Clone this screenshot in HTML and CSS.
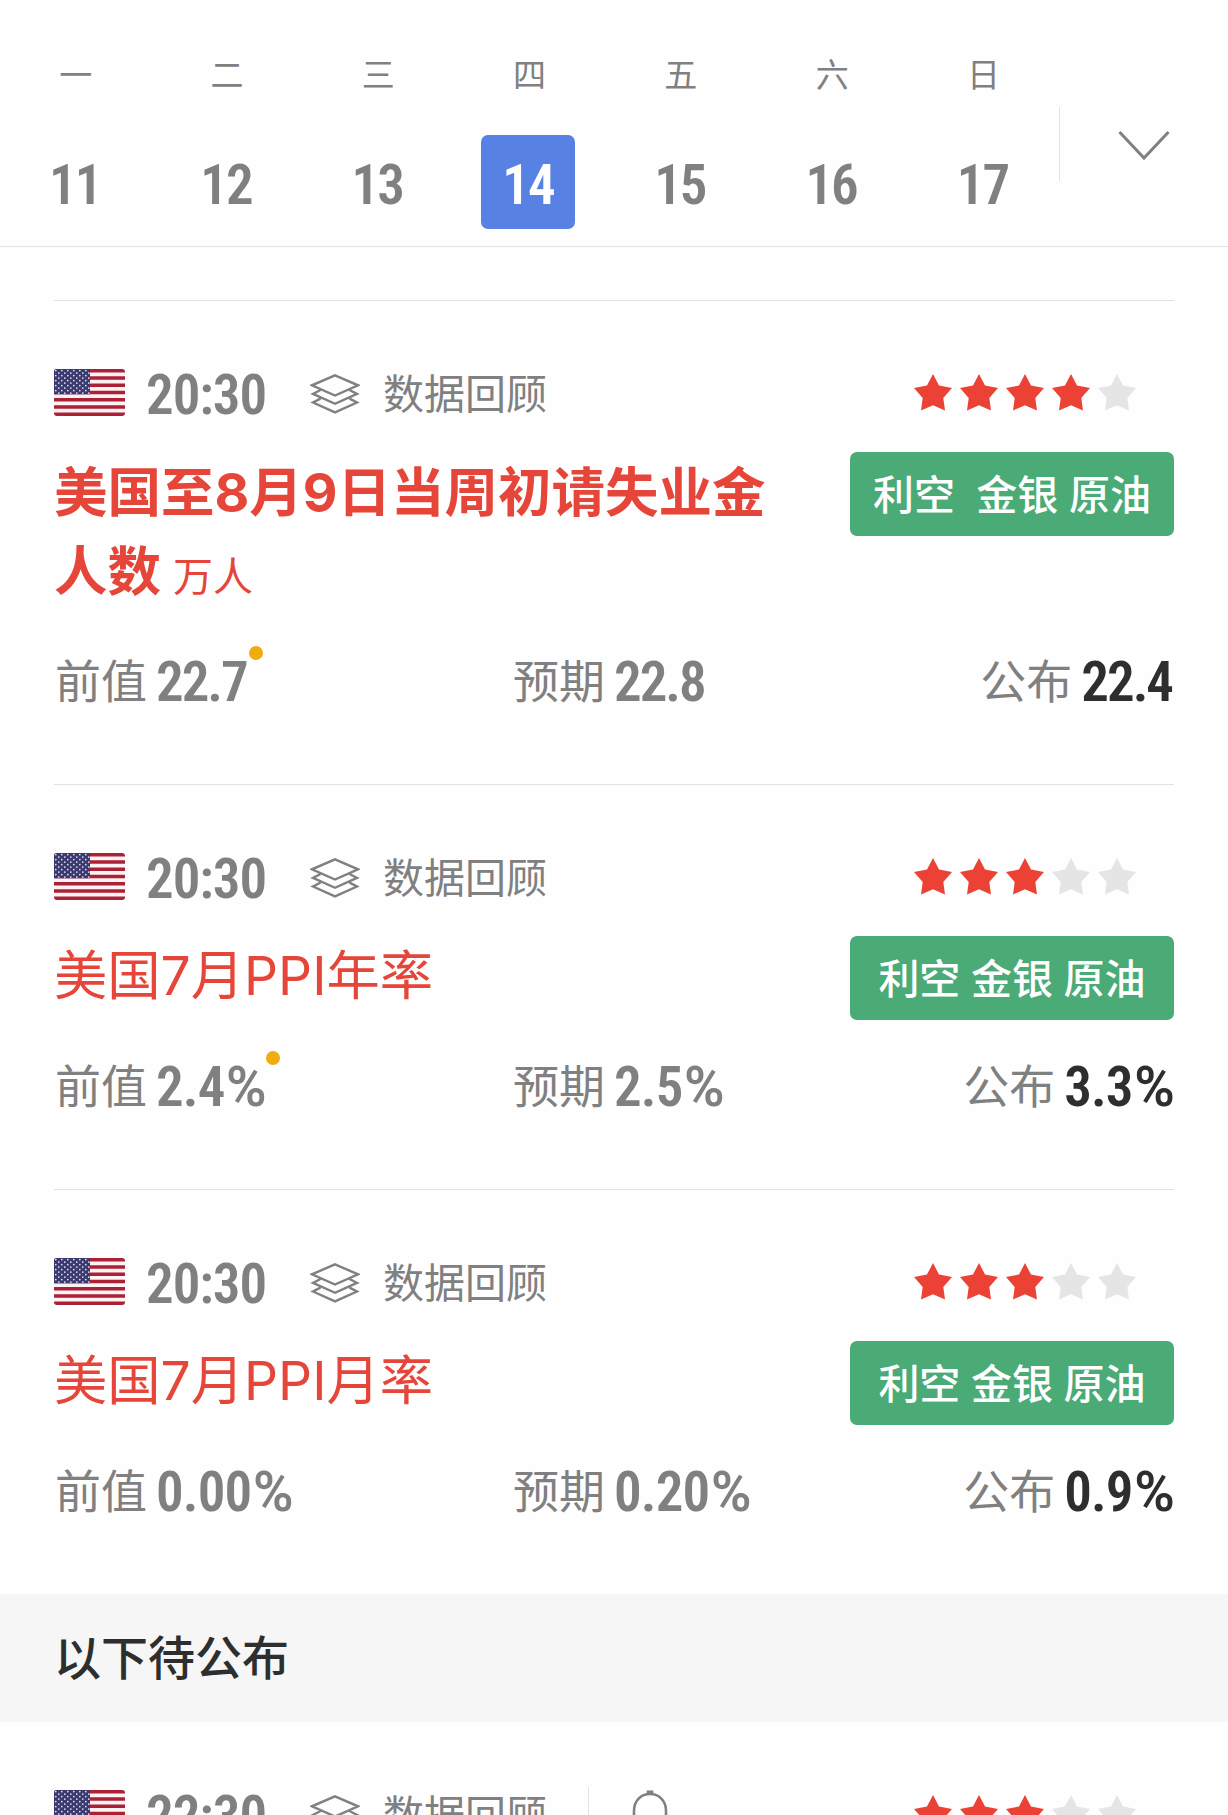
FILE: index.html
```
<!DOCTYPE html>
<html lang="zh-CN">
<head>
<meta charset="utf-8">
<title>财经日历</title>
<link rel="stylesheet" href="styles.css">
</head>
<body>
<svg class="sprite" width="0" height="0" aria-hidden="true">
  <defs>
    <pattern id="stars" width="6" height="5" patternUnits="userSpaceOnUse">
      <circle cx="1.8" cy="1.6" r="0.85" fill="#e4e4f2"/>
      <circle cx="4.8" cy="4.1" r="0.85" fill="#e4e4f2"/>
    </pattern>
    <clipPath id="flag-clip"><rect width="71" height="47" rx="3"/></clipPath>
  </defs>
  <symbol id="flag" viewBox="0 0 71 47">
    <g clip-path="url(#flag-clip)">
      <rect width="71" height="47" fill="#fdf3f4"/>
      <path d="M0 1.8H71M0 9.04H71M0 16.27H71M0 23.5H71M0 30.73H71M0 37.96H71M0 45.2H71" stroke="#ab2237" stroke-width="3.6"/>
      <rect width="36" height="25.3" fill="#3b3a70"/>
      <rect width="36" height="25.3" fill="url(#stars)"/>
    </g>
  </symbol>
  <symbol id="layers" viewBox="0 0 50 40">
    <path d="M25 1.300L48 11.300L25 21.500L2 11.300ZM10.500 16L3 19.900L25 29.800L47 19.900L39.500 16M10.500 24.600L3 28.500L25 38.400L47 28.500L39.500 24.600" fill="none" stroke="#808080" stroke-width="2.4"/>
  </symbol>
  <symbol id="star" viewBox="0 0 38 37">
    <path d="M19 0L25 11.5L38 14L29.3 24L31 36.5L19 31.3L7 36.5L8.7 24L0 14L13 11.5Z"/>
  </symbol>
</svg>

<header class="calendar">
  <div class="day"><span class="week">一</span><span class="date num">11</span></div>
  <div class="day"><span class="week">二</span><span class="date num">12</span></div>
  <div class="day"><span class="week">三</span><span class="date num">13</span></div>
  <div class="day"><span class="week">四</span><span class="date num active">14</span></div>
  <div class="day"><span class="week">五</span><span class="date num">15</span></div>
  <div class="day"><span class="week">六</span><span class="date num">16</span></div>
  <div class="day"><span class="week">日</span><span class="date num">17</span></div>
  <div class="expand">
    <svg width="52" height="30" viewBox="0 0 52 30"><path d="M1.500 2L26 28L50.500 2" fill="none" stroke="#808080" stroke-width="3"/></svg>
  </div>
</header>

<main>
  <article class="event">
    <div class="meta">
      <svg class="flag"><use href="#flag"/></svg>
      <span class="time num">20:30</span>
      <svg class="layers"><use href="#layers"/></svg>
      <span class="review">数据回顾</span>
      <div class="rating"><svg class="on"><use href="#star"/></svg><svg class="on"><use href="#star"/></svg><svg class="on"><use href="#star"/></svg><svg class="on"><use href="#star"/></svg><svg><use href="#star"/></svg></div>
    </div>
    <div class="headline">
      <h2 class="important">美国至8月9日当周初请失业金人数<small>万人</small></h2>
      <span class="badge">利空  金银 原油</span>
    </div>
    <div class="values">
      <div><span>前值</span><b class="num revised">22.7</b></div>
      <div><span>预期</span><b class="num">22.8</b></div>
      <div class="actual"><span>公布</span><b class="num">22.4</b></div>
    </div>
  </article>

  <article class="event">
    <div class="meta">
      <svg class="flag"><use href="#flag"/></svg>
      <span class="time num">20:30</span>
      <svg class="layers"><use href="#layers"/></svg>
      <span class="review">数据回顾</span>
      <div class="rating"><svg class="on"><use href="#star"/></svg><svg class="on"><use href="#star"/></svg><svg class="on"><use href="#star"/></svg><svg><use href="#star"/></svg><svg><use href="#star"/></svg></div>
    </div>
    <div class="headline">
      <h2>美国7月PPI年率</h2>
      <span class="badge">利空 金银 原油</span>
    </div>
    <div class="values percent">
      <div><span>前值</span><b class="num revised">2.4<i>%</i></b></div>
      <div><span>预期</span><b class="num">2.5<i>%</i></b></div>
      <div class="actual"><span>公布</span><b class="num">3.3<i>%</i></b></div>
    </div>
  </article>

  <article class="event">
    <div class="meta">
      <svg class="flag"><use href="#flag"/></svg>
      <span class="time num">20:30</span>
      <svg class="layers"><use href="#layers"/></svg>
      <span class="review">数据回顾</span>
      <div class="rating"><svg class="on"><use href="#star"/></svg><svg class="on"><use href="#star"/></svg><svg class="on"><use href="#star"/></svg><svg><use href="#star"/></svg><svg><use href="#star"/></svg></div>
    </div>
    <div class="headline">
      <h2>美国7月PPI月率</h2>
      <span class="badge">利空 金银 原油</span>
    </div>
    <div class="values percent">
      <div><span>前值</span><b class="num">0.00<i>%</i></b></div>
      <div><span>预期</span><b class="num">0.20<i>%</i></b></div>
      <div class="actual"><span>公布</span><b class="num">0.9<i>%</i></b></div>
    </div>
  </article>

  <h3 class="pending">以下待公布</h3>

  <article class="event upcoming">
    <div class="meta">
      <svg class="flag"><use href="#flag"/></svg>
      <span class="time num">22:30</span>
      <svg class="layers"><use href="#layers"/></svg>
      <span class="review">数据回顾</span>
      <span class="remind">
        <svg width="40" height="47" viewBox="0 0 40 47"><path d="M4 37V21C4 10.500 11 4 20 4S36 10.500 36 21V37M0 37H40M15 42H25" fill="none" stroke="#808080" stroke-width="2.600"/><path d="M16.700 0.500H23.300V4.500H16.700Z" fill="#808080"/></svg>
      </span>
      <div class="rating"><svg class="on"><use href="#star"/></svg><svg class="on"><use href="#star"/></svg><svg class="on"><use href="#star"/></svg><svg><use href="#star"/></svg><svg><use href="#star"/></svg></div>
    </div>
  </article>
</main>
</body>
</html>
```
FILE: styles.css
```
* {
  box-sizing: border-box;
}

body {
  margin: 0;
  height: 1815px;
  overflow: hidden;
  background: #fefefe;
  color: #808080;
  font-family: "Noto Sans CJK SC", sans-serif;
}

svg {
  display: block;
  flex: none;
}

.sprite {
  position: absolute;
}

.num {
  font-family: "Roboto Condensed", Roboto, sans-serif;
  font-stretch: 75%;
  font-size: 55px;
  font-weight: 600;
  line-height: 64px;
}

/* Week strip */
.calendar {
  display: flex;
  height: 247px;
  border-bottom: 1px solid #e2e2e2;
}

.day {
  display: flex;
  flex-direction: column;
  align-items: center;
  width: 151.3px;
  padding-top: 53px;
}

.week {
  height: 40px;
  font-size: 33px;
  line-height: 40px;
}

.date {
  width: 94px;
  height: 94px;
  margin-top: 42px;
  padding-right: 2px;
  border-radius: 7px;
  line-height: 101px;
  letter-spacing: -2px;
  text-align: center;
}

.date.active {
  margin-left: -3px;
  padding-right: 0;
  background: #5881e4;
  color: #fff;
}

.expand {
  display: flex;
  flex: 1;
  justify-content: center;
  align-items: center;
  height: 74px;
  margin-top: 107px;
  padding-top: 2px;
  border-left: 1px solid #e2e2e2;
}

/* Events */
main {
  padding-top: 53px;
}

.event {
  height: 405px;
  margin: 0 54px;
  padding-top: 68px;
  border-top: 1px solid #e2e2e2;
}

.event:first-child {
  height: 484px;
}

.upcoming {
  height: 93px;
  padding-top: 67px;
  border-color: transparent;
}

.meta {
  display: flex;
  height: 47px;
}

.flag {
  width: 71px;
  height: 47px;
}

.time {
  width: 141px;
  margin: -6px 0 0 21px;
  letter-spacing: -1px;
}

.layers {
  width: 50px;
  height: 40px;
  margin: 5px 0 0 23px;
}

.review {
  margin-left: 23px;
  font-size: 41px;
  line-height: 45px;
}

.rating {
  display: flex;
  gap: 8px;
  margin: 5px 38px 0 auto;
}

.rating svg {
  width: 38px;
  height: 37px;
  fill: #e5e5e5;
}

.rating .on {
  fill: #ec4236;
}

.remind {
  height: 60px;
  margin: -3px 0 0 41px;
  padding: 3px 0 0 41px;
  border-left: 1px solid #e2e2e2;
}

.headline {
  display: flex;
  justify-content: space-between;
  align-items: flex-start;
  margin-top: 36px;
}

h2 {
  width: 740px;
  margin: 0;
  color: #e64539;
  font-family: Inter, "Noto Sans CJK SC", sans-serif;
  font-size: 53.3px;
  font-weight: 400;
  line-height: 79px;
}

.important {
  padding: 1px 0 4px;
  font-size: 53.5px;
  font-weight: 700;
}

h2 small {
  margin-left: 12px;
  font-size: 40px;
  font-weight: 400;
  line-height: 1;
}

.badge {
  width: 324px;
  height: 84px;
  border-radius: 7px;
  background: #4aab76;
  color: #fff;
  font-size: 41px;
  font-weight: 500;
  line-height: 80px;
  text-align: center;
  word-spacing: 1.4px;
  white-space: pre;
}

.values {
  display: grid;
  grid-template-columns: 458px 300px 1fr;
  height: 64px;
  margin-top: 35px;
  padding-left: 1px;
  font-size: 46px;
  line-height: 57px;
}

.values > div {
  display: flex;
}

.values .num {
  position: relative;
  margin-left: 9px;
  letter-spacing: -2px;
}

.percent .num {
  letter-spacing: -0.8px;
}

.percent i {
  margin-left: 1.5px;
  font-family: Roboto, sans-serif;
  font-style: normal;
  font-stretch: 100%;
}

.values .actual {
  justify-content: flex-end;
}

.actual .num {
  color: #2e2e2e;
}

.values:not(.percent) .actual {
  padding-right: 2px;
}

/* Marks a previous value that was revised */
.revised::after {
  content: "";
  position: absolute;
  top: -4px;
  right: -16px;
  width: 14px;
  height: 14px;
  border-radius: 50%;
  background: #f1ac12;
}

.percent .revised::after {
  right: -14px;
}

.pending {
  height: 128px;
  margin: 0;
  padding-left: 54px;
  background: #f6f6f6;
  color: #2e2e2e;
  font-size: 47px;
  font-weight: 500;
  line-height: 122px;
}
```
